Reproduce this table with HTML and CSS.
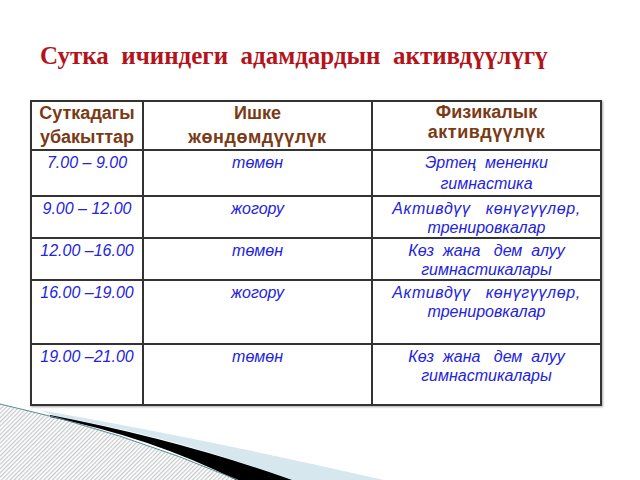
FILE: index.html
```html
<!DOCTYPE html>
<html lang="ky">
<head>
<meta charset="utf-8">
<title>Сутка ичиндеги адамдардын активдүүлүгү</title>
<link rel="stylesheet" href="styles.css">
</head>
<body>
<div class="slide">
  <h1 class="title">Сутка&nbsp; ичиндеги&nbsp; адамдардын&nbsp; активдүүлүгү</h1>
  <table class="grid">
    <colgroup>
      <col class="c1"><col class="c2"><col class="c3">
    </colgroup>
    <tr class="r-head">
      <th class="h1">Суткадагы<br>убакыттар</th>
      <th class="h2">Ишке<br><span class="wide">жөндөмдүүлүк</span></th>
      <th class="h3">Физикалык<br><span class="wide">активдүүлүк</span></th>
    </tr>
    <tr class="r1">
      <td class="time">7.00 – 9.00</td>
      <td class="lvl">төмөн</td>
      <td class="act first">Эртең&nbsp; мененки<br>гимнастика</td>
    </tr>
    <tr class="r2">
      <td class="time">9.00 – 12.00</td>
      <td class="lvl">жогору</td>
      <td class="act"><span class="spread">Активдүү&nbsp;&nbsp; көнүгүүлөр,</span><br>тренировкалар</td>
    </tr>
    <tr class="r3">
      <td class="time">12.00 –16.00</td>
      <td class="lvl">төмөн</td>
      <td class="act">Көз&nbsp; жана&nbsp;&nbsp; дем&nbsp; алуу<br>гимнастикалары</td>
    </tr>
    <tr class="r4">
      <td class="time">16.00 –19.00</td>
      <td class="lvl">жогору</td>
      <td class="act"><span class="spread">Активдүү&nbsp;&nbsp; көнүгүүлөр,</span><br>тренировкалар</td>
    </tr>
    <tr class="r5">
      <td class="time">19.00 –21.00</td>
      <td class="lvl">төмөн</td>
      <td class="act">Көз&nbsp; жана&nbsp;&nbsp; дем&nbsp; алуу<br>гимнастикалары</td>
    </tr>
  </table>
  <svg class="swoosh" width="400" height="80" viewBox="0 0 400 80" aria-hidden="true">
    <defs>
      <pattern id="hatch" width="3" height="3" patternUnits="userSpaceOnUse" patternTransform="rotate(45)">
        <rect width="3" height="3" fill="#ffffff"/>
        <rect width="1.2" height="3" fill="#c4c8ca"/>
      </pattern>
    </defs>
    <path d="M0,4 Q120,30 238,80 L0,80 Z" fill="url(#hatch)"/>
    <path d="M40,10 Q210,40 384,80 L290,80 Q180,38 55,16 Z" fill="#d6e7ee"/>
    <path d="M50,15 Q180,40 292,80 L236,80 Q150,37 50,17 Z" fill="#000"/>
    <path d="M0,4 Q120,30 238,80" fill="none" stroke="#5f8d9a" stroke-width="1"/>
  </svg>
</div>
</body>
</html>
```

FILE: styles.css
```css
html, body {
  margin: 0;
  padding: 0;
  background: #ffffff;
}
.slide {
  position: relative;
  width: 640px;
  height: 480px;
  overflow: hidden;
  font-family: "Liberation Sans", Arial, sans-serif;
}
.title {
  margin: 0;
  padding: 41px 0 0 40px;
  height: 100px;
  box-sizing: border-box;
  font-family: "Liberation Serif", "Times New Roman", serif;
  font-weight: bold;
  font-size: 25px;
  line-height: 30px;
  color: #b3141c;
  white-space: nowrap;
}
.grid {
  margin-left: 30px;
  width: 572px;
  table-layout: fixed;
  border-collapse: collapse;
  border: 2px solid #111;
  box-shadow: 1px 1px 2px rgba(0,0,0,0.35);
}
.c1 { width: 112px; }
.c2 { width: 229px; }
.c3 { width: 229px; }
.grid th, .grid td {
  border: 2px solid #333;
  padding: 0;
  vertical-align: top;
  text-align: center;
}
.grid th {
  font-weight: bold;
  font-size: 18px;
  color: #7a3a14;
}
.wide { letter-spacing: 0.5px; }
.spread { letter-spacing: 0.6px; }
.h1, .h2 { line-height: 23.5px; padding-top: 0; }
.h3 { line-height: 20px; padding-top: 3px; }
.grid td {
  font-style: italic;
  font-size: 16px;
  line-height: 19px;
  color: #2323e0;
  padding-top: 2px;
}
.grid td.act.first { line-height: 21px; padding-top: 1px; }
.r-head { height: 48px; }
.r1 { height: 46px; }
.r2 { height: 42px; }
.r3 { height: 42px; }
.r4 { height: 64px; }
.r5 { height: 61px; }
.swoosh {
  position: absolute;
  left: 0;
  top: 400px;
}
```
